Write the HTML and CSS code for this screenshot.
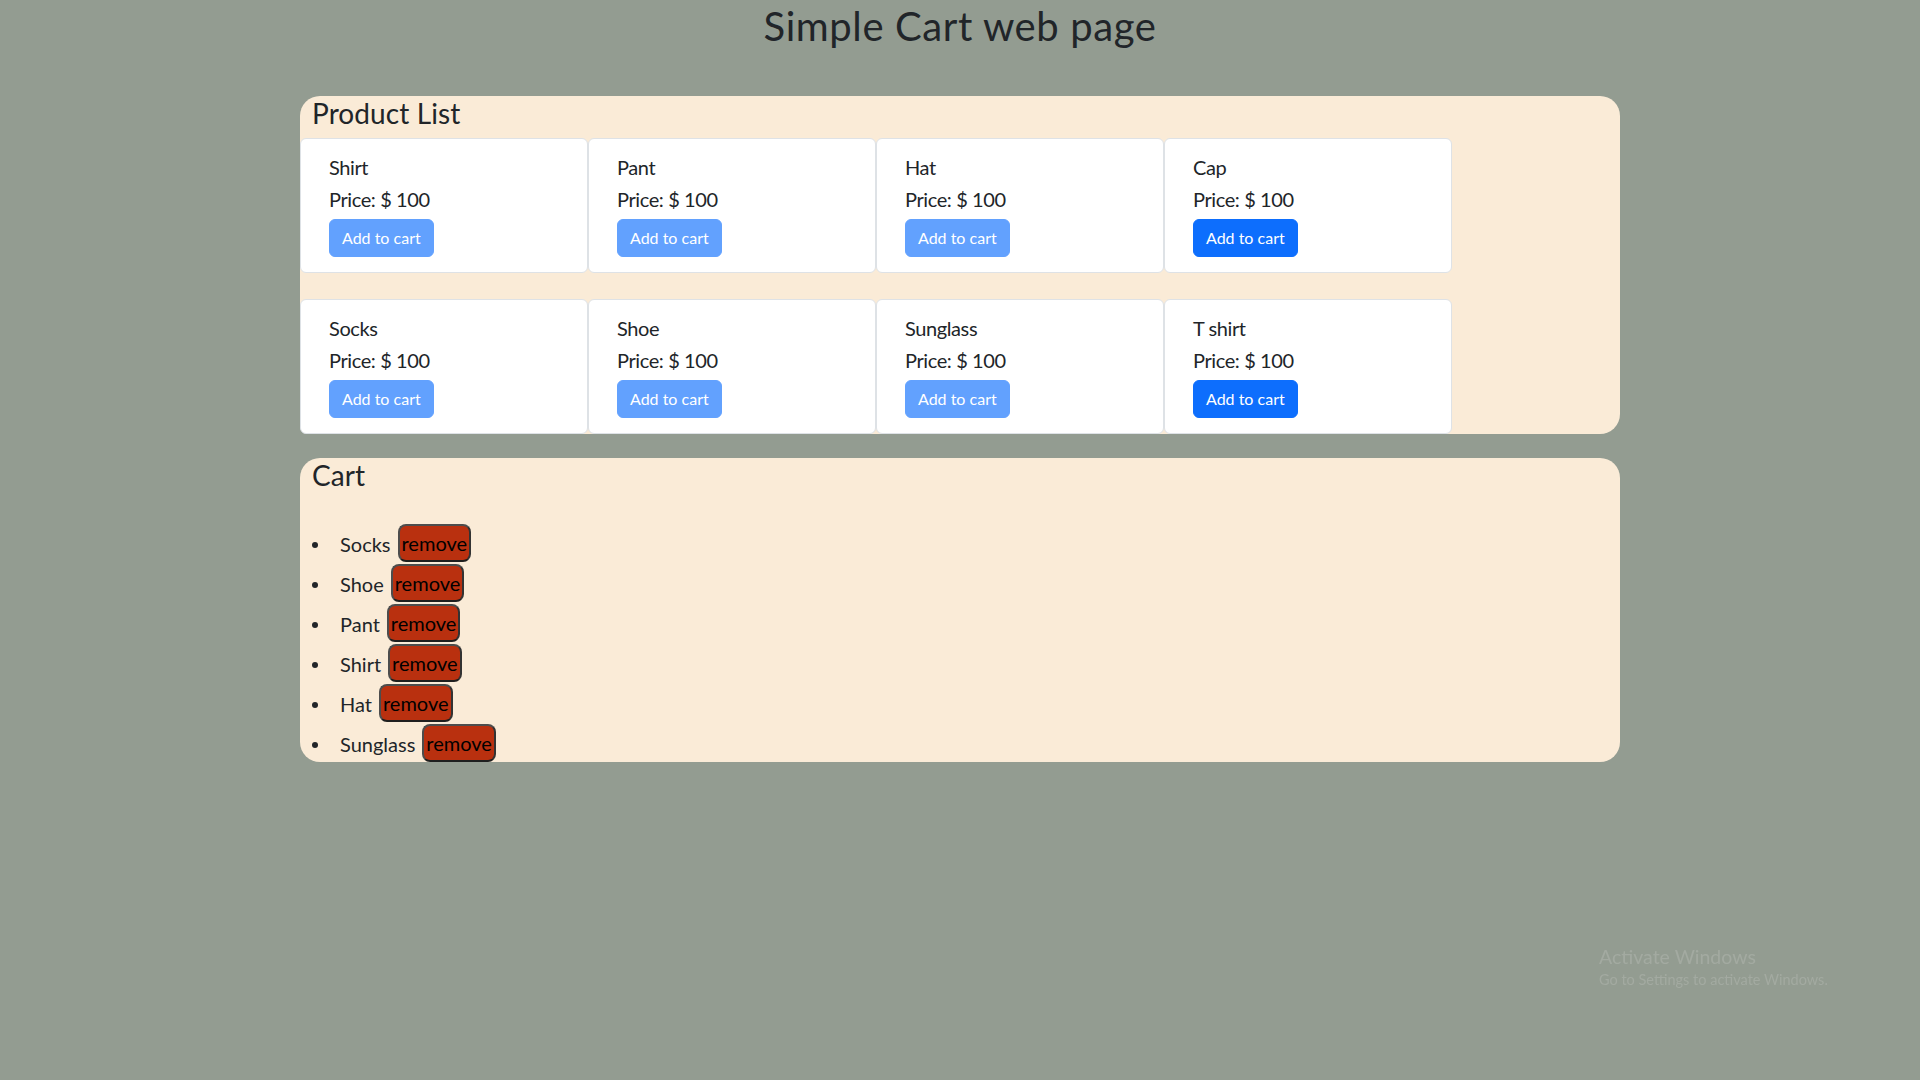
FILE: index.html
```html
<!DOCTYPE html>
<html lang="en">
<head>
<meta charset="utf-8">
<title>Simple Cart web page</title>
<link rel="stylesheet" href="styles.css">
</head>
<body>
<h1 class="page-title">Simple Cart web page</h1>
<main class="container">
  <section class="panel">
    <h3 class="panel-title">Product List</h3>
    <div class="cards">
      <div class="card"><h5 class="card-title">Shirt</h5><h5 class="card-price">Price: $ 100</h5><button class="btn btn-faded">Add to cart</button></div>
      <div class="card"><h5 class="card-title">Pant</h5><h5 class="card-price">Price: $ 100</h5><button class="btn btn-faded">Add to cart</button></div>
      <div class="card"><h5 class="card-title">Hat</h5><h5 class="card-price">Price: $ 100</h5><button class="btn btn-faded">Add to cart</button></div>
      <div class="card"><h5 class="card-title">Cap</h5><h5 class="card-price">Price: $ 100</h5><button class="btn btn-primary">Add to cart</button></div>
      <div class="card"><h5 class="card-title">Socks</h5><h5 class="card-price">Price: $ 100</h5><button class="btn btn-faded">Add to cart</button></div>
      <div class="card"><h5 class="card-title">Shoe</h5><h5 class="card-price">Price: $ 100</h5><button class="btn btn-faded">Add to cart</button></div>
      <div class="card"><h5 class="card-title">Sunglass</h5><h5 class="card-price">Price: $ 100</h5><button class="btn btn-faded">Add to cart</button></div>
      <div class="card"><h5 class="card-title">T shirt</h5><h5 class="card-price">Price: $ 100</h5><button class="btn btn-primary">Add to cart</button></div>
    </div>
  </section>
  <section class="panel cart">
    <h3 class="panel-title">Cart</h3>
    <ul class="cart-list">
      <li class="cart-item"><span class="item-name">Socks</span><button class="remove">remove</button></li>
      <li class="cart-item"><span class="item-name">Shoe</span><button class="remove">remove</button></li>
      <li class="cart-item"><span class="item-name">Pant</span><button class="remove">remove</button></li>
      <li class="cart-item"><span class="item-name">Shirt</span><button class="remove">remove</button></li>
      <li class="cart-item"><span class="item-name">Hat</span><button class="remove">remove</button></li>
      <li class="cart-item"><span class="item-name">Sunglass</span><button class="remove">remove</button></li>
    </ul>
  </section>
</main>
<div class="watermark">
  <div class="wm-title">Activate Windows</div>
  <div class="wm-sub">Go to Settings to activate Windows.</div>
</div>
</body>
</html>
```
FILE: styles.css
```css
html, body {
  margin: 0;
  padding: 0;
}
body {
  background: #939c91;
  color: #212529;
  font-family: Lato, "Open Sans", sans-serif;
  font-size: 16px;
  min-height: 1080px;
}
.page-title {
  margin: 0 0 46px;
  padding-top: 2px;
  font-size: 40px;
  line-height: 48px;
  font-weight: 400;
  letter-spacing: 0.6px;
  text-align: center;
}
.container {
  width: 1320px;
  margin: 0 auto;
}
.panel {
  background: #faebd7;
  border-radius: 20px;
}
.panel.cart {
  margin-top: 24px;
}
.panel-title {
  margin: 0 0 8px;
  padding-left: 12px;
  font-size: 28px;
  line-height: 34px;
  font-weight: 400;
  letter-spacing: 0.1px;
}
.cards {
  display: flex;
  flex-wrap: wrap;
  width: 1152px;
  row-gap: 26px;
}
.card {
  box-sizing: border-box;
  width: 288px;
  height: 135px;
  background: #fff;
  border: 1px solid #dee2e6;
  border-radius: 6px;
  padding: 16px 16px 15px 28px;
}
.card-title, .card-price {
  margin: 0 0 8px;
  font-size: 20px;
  line-height: 24px;
  font-weight: 400;
  letter-spacing: -0.4px;
}
.btn {
  display: block;
  box-sizing: border-box;
  height: 38px;
  padding: 6px 12px;
  border: 1px solid transparent;
  border-radius: 6px;
  font-family: inherit;
  font-size: 16px;
  line-height: 24px;
  color: #fff;
}
.btn-primary {
  background: #0d6efd;
  border-color: #0d6efd;
}
.btn-faded {
  background: #62a1fe;
  border-color: #62a1fe;
}
.cart-list {
  list-style: none;
  margin: 30px 0 0;
  padding: 0 0 0 12px;
}
.cart-item {
  display: flex;
  align-items: center;
  box-sizing: border-box;
  height: 40px;
  padding-top: 2px;
  font-size: 20px;
}
.cart-item::before {
  content: "";
  width: 6px;
  height: 6px;
  margin: 3px 22px 0 0;
  border-radius: 50%;
  background: #212529;
}
.item-name {
  line-height: 24px;
  margin-top: 2px;
  margin-right: 7px;
}
.remove {
  box-sizing: border-box;
  height: 38px;
  padding: 0 2px;
  background: #b9300f;
  border: 2px solid #4d4d4d;
  border-bottom-color: #1f1f1f;
  border-right-color: #333;
  border-radius: 8px;
  color: #000;
  font-family: inherit;
  font-size: 20px;
  line-height: 34px;
}
.watermark {
  position: fixed;
  left: 1599px;
  top: 945px;
  color: #a3aaa1;
}
.wm-title {
  font-size: 19.5px;
  line-height: 24px;
}
.wm-sub {
  margin-top: 2px;
  font-size: 14.5px;
  line-height: 17px;
}
```
